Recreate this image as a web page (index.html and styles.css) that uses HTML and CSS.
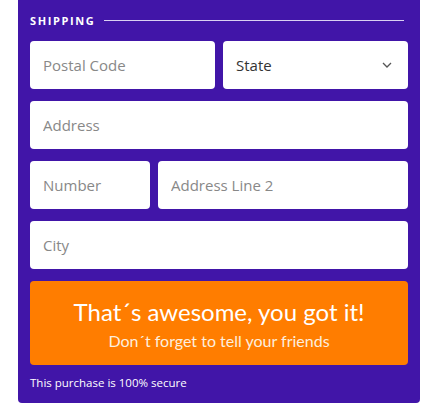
FILE: index.html
```html
<!DOCTYPE html>
<html lang="en">

<head>
  <meta charset="UTF-8" />
  <meta name="viewport" content="width=device-width, initial-scale=1.0" />
  <title>Shipping</title>
  <link rel="stylesheet" href="styles.css">
</head>

<body>
  <div class="panel">
    <div class="legend">
      <span>SHIPPING</span>
      <i class="rule"></i>
    </div>
    <div class="row half">
      <input class="field" type="text" placeholder="Postal Code" />
      <div class="select-box">
        <select class="field select">
          <option>State</option>
        </select>
        <svg class="chevron" width="10" height="6" viewBox="0 0 10 6">
          <path d="M1 1l4 4 4-4" fill="none" stroke="#555" stroke-width="1.3" />
        </svg>
      </div>
    </div>
    <div class="row">
      <input class="field" type="text" placeholder="Address" />
    </div>
    <div class="row number">
      <input class="field" type="text" placeholder="Number" />
      <input class="field" type="text" placeholder="Address Line 2" />
    </div>
    <div class="row">
      <input class="field" type="text" placeholder="City" />
    </div>
    <button class="cta">
      <span class="cta-title">That´s awesome, you got it!</span>
      <span class="cta-sub">Don´t forget to tell your friends</span>
    </button>
    <p class="secure">This purchase is 100% secure</p>
  </div>
</body>

</html>
```

FILE: styles.css
```css
* {
  margin: 0;
  padding: 0;
  box-sizing: border-box;
}

body {
  background: #fff;
  font-family: "Open Sans", "Noto Sans", sans-serif;
}

.panel {
  width: 402px;
  margin-left: 18px;
  padding: 12px 12px 0;
  height: 403px;
  background: #4115a8;
  border-radius: 0 0 4px 4px;
}

.legend {
  display: flex;
  align-items: center;
  gap: 9px;
  height: 16px;
  margin-bottom: 13px;
  padding-right: 4px;
}

.legend span {
  color: #fff;
  font-size: 11px;
  font-weight: 700;
  letter-spacing: 1.6px;
}

.legend .rule {
  flex: 1;
  height: 1px;
  background: #d9d0f2;
}

.row {
  display: grid;
  grid-template-columns: 1fr;
  gap: 8px;
  margin-bottom: 12px;
}

.row.half {
  grid-template-columns: 1fr 1fr;
}

.row.number {
  grid-template-columns: 120px 1fr;
}

.row > * {
  min-width: 0;
}

.field {
  display: block;
  width: 100%;
  height: 48px;
  border: none;
  border-radius: 4px;
  background: #fff;
  padding: 0 13px;
  font-family: "Open Sans", "Noto Sans", sans-serif;
  font-size: 15px;
  color: #333;
  outline: none;
}

.field::placeholder {
  color: #888;
}

.select-box {
  position: relative;
}

.select {
  appearance: none;
  -webkit-appearance: none;
  color: #333;
}

.chevron {
  position: absolute;
  right: 16px;
  top: 21px;
  pointer-events: none;
}

.cta {
  display: flex;
  flex-direction: column;
  align-items: center;
  width: 100%;
  height: 84px;
  border: none;
  border-radius: 4px;
  background: #ff7d00;
  color: #fff;
  font-family: Lato, "Open Sans", sans-serif;
  padding-top: 14px;
}

.cta-title {
  font-size: 24px;
  line-height: 34px;
}

.cta-sub {
  font-size: 16px;
  line-height: 24px;
  color: #fdeede;
}

.secure {
  margin-top: 10px;
  color: #fff;
  font-size: 11.5px;
  line-height: 16px;
}
```
